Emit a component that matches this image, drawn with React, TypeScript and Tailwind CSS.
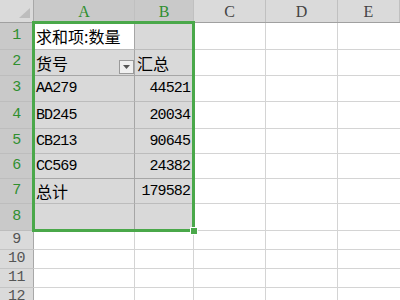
const monoFont = "font-[family-name:'Liberation_Mono','Noto_Sans_CJK_SC',monospace]";
const cjkFont = "font-[family-name:'Noto_Sans_CJK_SC',sans-serif]";
const serifFont = "font-[family-name:'Liberation_Serif',serif]";

type Row = {
  h: string;
  a?: string;
  b?: string;
  cjkA?: boolean;
  cjkB?: boolean;
  num?: boolean;
};

const rows: Row[] = [
  { h: "h-[27px]", a: "求和项:数量", cjkA: true },
  { h: "h-[26px]", a: "货号", b: "汇总", cjkA: true, cjkB: true },
  { h: "h-[26px]", a: "AA279", b: "44521", num: true },
  { h: "h-[27px]", a: "BD245", b: "20034", num: true },
  { h: "h-[25px]", a: "CB213", b: "90645", num: true },
  { h: "h-[25px]", a: "CC569", b: "24382", num: true },
  { h: "h-[25px]", a: "总计", b: "179582", cjkA: true, num: true },
  { h: "h-[27px]" },
];

const emptyRows = ["h-[19px]", "h-[19px]", "h-[19px]", "h-[19px]"];

function textCls(cjk?: boolean) {
  return cjk
    ? `text-[16px] ${cjkFont}`
    : `text-[15px] tracking-[-0.9px] pt-[2px] ${monoFont}`;
}

function ColHeader({ label, selected, w }: { label: string; selected?: boolean; w: string }) {
  return (
    <div
      className={`${w} h-full flex items-center justify-center border-r border-[#c0c0c0] text-[16px] pt-[1px] ${serifFont} ${
        selected ? "bg-[#c9c9c9] text-[#2f8f2f]" : "bg-[#dadada] text-[#444]"
      }`}
    >
      {label}
    </div>
  );
}

function RowNum({ n, selected }: { n: number; selected?: boolean }) {
  return (
    <div
      className={`w-[34px] shrink-0 h-full flex items-center justify-center border-r border-[#a8a8a8] text-[15px] tracking-[-0.5px] ${monoFont} ${
        selected ? "bg-[#c9c9c9] text-[#2f8f2f]" : "bg-[#dadada] text-[#555]"
      }`}
    >
      {n}
    </div>
  );
}

export default function App() {
  return (
    <div className="relative w-[400px] h-[300px] overflow-hidden bg-white">
      {/* column headers */}
      <div className="flex h-[23px] border-b border-[#a0a0a0]">
        <div className="w-[34px] shrink-0 h-full bg-[#dadada] border-r border-[#a8a8a8] flex items-end justify-end pr-[3px] pb-[4px]">
          <svg width="11" height="10" viewBox="0 0 11 10">
            <polygon points="11,0 11,10 0,10" fill="#bdbdbd" />
          </svg>
        </div>
        <ColHeader label="A" selected w="w-[101px]" />
        <ColHeader label="B" selected w="w-[59px]" />
        <ColHeader label="C" w="w-[72px]" />
        <ColHeader label="D" w="w-[72px]" />
        <ColHeader label="E" w="flex-1" />
      </div>

      {/* pivot rows */}
      {rows.map((r, i) => {
        const darkLine = i === 1 || i === 5;
        return (
          <div key={i} className={`flex ${r.h}`}>
            <div className="border-b border-[#bdbdbd] flex">
              <RowNum n={i + 1} selected />
            </div>
            <div
              className={`relative w-[101px] shrink-0 flex items-center pl-[2px] border-r border-[#a6a6a6] border-b ${
                darkLine ? "border-b-[#a6a6a6]" : "border-b-[#bcbcbc]"
              } ${i === 0 ? "bg-white" : "bg-[#d9d9d9]"} text-black ${textCls(r.cjkA)}`}
            >
              {r.a}
              {i === 1 && (
                <div className="absolute right-0 bottom-[1px] w-[15px] h-[14px] border border-[#9a9a9a] bg-[#f0f0f0] flex items-center justify-center">
                  <svg width="7" height="4" viewBox="0 0 7 4">
                    <polygon points="0,0 7,0 3.5,4" fill="#555" />
                  </svg>
                </div>
              )}
            </div>
            <div
              className={`w-[59px] shrink-0 flex items-center border-r border-[#bcbcbc] border-b ${
                darkLine ? "border-b-[#a6a6a6]" : "border-b-[#bcbcbc]"
              } bg-[#d9d9d9] text-black ${r.num ? "justify-end pr-[3px]" : "pl-[2px]"} ${textCls(r.cjkB)}`}
            >
              {r.b}
            </div>
            <div className="w-[72px] shrink-0 border-r border-b border-[#d4d4d4]" />
            <div className="w-[72px] shrink-0 border-r border-b border-[#d4d4d4]" />
            <div className="flex-1 border-b border-[#d4d4d4]" />
          </div>
        );
      })}

      {/* empty rows */}
      {emptyRows.map((h, i) => (
        <div key={i} className={`flex ${h}`}>
          <div className="border-b border-[#c4c4c4] flex">
            <RowNum n={i + 9} />
          </div>
          <div className="w-[101px] shrink-0 border-r border-b border-[#d4d4d4]" />
          <div className="w-[59px] shrink-0 border-r border-b border-[#d4d4d4]" />
          <div className="w-[72px] shrink-0 border-r border-b border-[#d4d4d4]" />
          <div className="w-[72px] shrink-0 border-r border-b border-[#d4d4d4]" />
          <div className="flex-1 border-b border-[#d4d4d4]" />
        </div>
      ))}

      {/* selection outline */}
      <div className="absolute left-[32px] top-[21px] w-[163px] h-[211px] border-[3px] border-[#4aa84a] pointer-events-none" />
      <div className="absolute left-[190px] top-[227px] w-[8px] h-[8px] bg-[#4aa84a] border border-white" />
    </div>
  );
}
